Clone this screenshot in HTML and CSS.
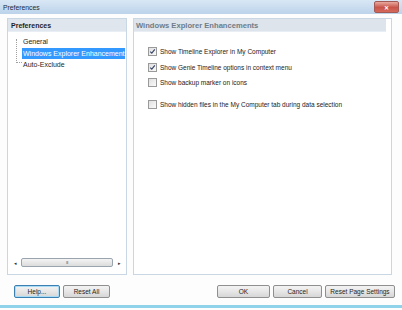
FILE: index.html
```html
<!DOCTYPE html>
<html lang="en">
<head>
    <meta charset="UTF-8">
    <title>Preferences</title>
    <link rel="stylesheet" href="styles.css">
</head>
<body>
    <div class="window">
        <div class="titlebar">
            <span class="title">Preferences</span>
            <span class="close">&#x2715;</span>
        </div>
        <div class="content">
            <div class="panes">
                <div class="pane left">
                    <div class="pane-head">Preferences</div>
                    <div class="tree">
                        <div class="tree-line"></div>
                        <div class="node">General</div>
                        <div class="node selected">Windows Explorer Enhancements</div>
                        <div class="node">Auto-Exclude</div>
                    </div>
                    <div class="hscroll">
                        <span class="arrow">&#x25C2;</span>
                        <span class="thumb">III</span>
                        <span class="arrow">&#x25B8;</span>
                    </div>
                </div>
                <div class="pane right">
                    <div class="pane-head gray">Windows Explorer Enhancements</div>
                    <div class="options">
                        <label class="opt"><span class="box checked"><svg width="7" height="7" viewBox="0 0 7 7"><path d="M1.2 3.6 L2.8 5.2 L5.8 1.4" fill="none" stroke="#3a4a6a" stroke-width="1.2"/></svg></span>Show Timeline Explorer in My Computer</label>
                        <label class="opt"><span class="box checked"><svg width="7" height="7" viewBox="0 0 7 7"><path d="M1.2 3.6 L2.8 5.2 L5.8 1.4" fill="none" stroke="#3a4a6a" stroke-width="1.2"/></svg></span>Show Genie Timeline options in context menu</label>
                        <label class="opt"><span class="box"></span>Show backup marker on icons</label>
                        <label class="opt spaced"><span class="box"></span>Show hidden files in the My Computer tab during data selection</label>
                    </div>
                </div>
            </div>
            <div class="buttons">
                <button class="btn default help">Help...</button>
                <button class="btn reset-all">Reset All</button>
                <span class="spacer"></span>
                <button class="btn ok">OK</button>
                <button class="btn cancel">Cancel</button>
                <button class="btn reset-page">Reset Page Settings</button>
            </div>
        </div>
        <div class="bottom-edge"></div>
    </div>
</body>
</html>
```
FILE: styles.css
```css
body {
    margin: 0;
    font-family: "Liberation Sans", Arial, sans-serif;
    font-size: 6.5px;
    color: #1e1e1e;
    background-color: #ffffff;
}
.window {
    width: 402px;
    height: 310px;
    display: flex;
    flex-direction: column;
    background-color: #fdfdfd;
    overflow: hidden;
}
.titlebar {
    height: 14px;
    display: flex;
    align-items: center;
    justify-content: space-between;
    padding: 0 3px 0 3px;
    background: linear-gradient(to bottom, #d9e7f5, #bcd3ea);
}
.title {
    font-size: 6.8px;
    color: #1a2a3a;
}
.close {
    width: 23px;
    height: 10px;
    display: flex;
    align-items: center;
    justify-content: center;
    color: #ffffff;
    font-size: 6px;
    font-weight: bold;
    border-radius: 2px;
    border: 1px solid #a35a55;
    background: linear-gradient(to bottom, #e8a99e, #c9554a 55%, #d46a5c);
}
.content {
    flex: 1;
    display: flex;
    flex-direction: column;
    padding: 4px 10px 0 7px;
}
.panes {
    height: 257px;
    display: flex;
    gap: 6px;
}
.pane {
    border: 1px solid #c9d6e3;
    background-color: #ffffff;
    display: flex;
    flex-direction: column;
}
.left {
    width: 118px;
}
.right {
    flex: 1;
}
.pane-head {
    height: 12px;
    display: flex;
    align-items: center;
    padding-left: 3px;
    font-weight: bold;
    font-size: 7px;
    background-color: #dfe6ee;
    border-bottom: 1px solid #e8eef4;
}
.pane-head.gray {
    margin-right: 5px;
    padding-left: 2px;
    font-size: 7.6px;
    color: #6f7c89;
    background-color: #dde4eb;
}
.tree {
    flex: 1;
    position: relative;
    padding: 4px 0 0 14px;
}
.tree-line {
    position: absolute;
    left: 8px;
    top: 7px;
    width: 5px;
    height: 23px;
    border-left: 1px dotted #a0a0a0;
    border-bottom: 1px dotted #a0a0a0;
}
.node {
    position: relative;
    height: 11.5px;
    line-height: 11.5px;
    padding-left: 1px;
    white-space: nowrap;
    overflow: hidden;
    font-size: 7px;
}
.node::before {
    content: "";
    position: absolute;
    left: -5px;
    top: 6px;
    width: 4px;
    border-top: 1px dotted #a0a0a0;
}
.node.selected {
    background-color: #3399ff;
    color: #ffffff;
    margin-right: 1px;
}
.hscroll {
    height: 9px;
    margin: 0 3px 7px 3px;
    display: flex;
    align-items: center;
    gap: 2px;
    font-size: 5px;
    color: #333333;
}
.arrow {
    width: 8px;
    text-align: center;
}
.thumb {
    flex: 1;
    height: 7px;
    display: flex;
    align-items: center;
    justify-content: center;
    border: 1px solid #9aa4ae;
    border-radius: 2px;
    background: linear-gradient(to bottom, #f4f4f4, #dcdcdc);
    color: #666666;
    font-size: 4px;
    letter-spacing: -0.5px;
}
.options {
    padding: 12px 0 0 14px;
    display: flex;
    flex-direction: column;
}
.opt {
    height: 15.5px;
    display: flex;
    align-items: center;
    gap: 3px;
    color: #222222;
}
.opt.spaced {
    margin-top: 6px;
}
.box {
    width: 7px;
    height: 7px;
    border: 1px solid #9a9a9a;
    background: linear-gradient(to bottom right, #e0e0e0, #fafafa);
    display: flex;
}
.buttons {
    margin-top: 10px;
    padding-left: 7px;
    display: flex;
    gap: 3px;
}
.spacer {
    flex: 1;
}
.btn {
    height: 13px;
    padding: 0;
    font-family: "Liberation Sans", Arial, sans-serif;
    font-size: 6.5px;
    color: #1e1e1e;
    border: 1px solid #8e8f8f;
    border-radius: 2px;
    background: linear-gradient(to bottom, #f3f3f3, #e6e6e6 50%, #d6d6d6);
}
.btn.default {
    border-color: #3c7fb1;
    box-shadow: inset 0 0 0 1px #a8dcf6;
}
.help { width: 46px; }
.reset-all { width: 47px; }
.ok { width: 53px; }
.cancel { width: 49px; }
.reset-page { width: 70px; margin-right: -3px; }
.bottom-edge {
    height: 3px;
    margin-bottom: 2px;
    background-color: #8fd3ea;
}
```
